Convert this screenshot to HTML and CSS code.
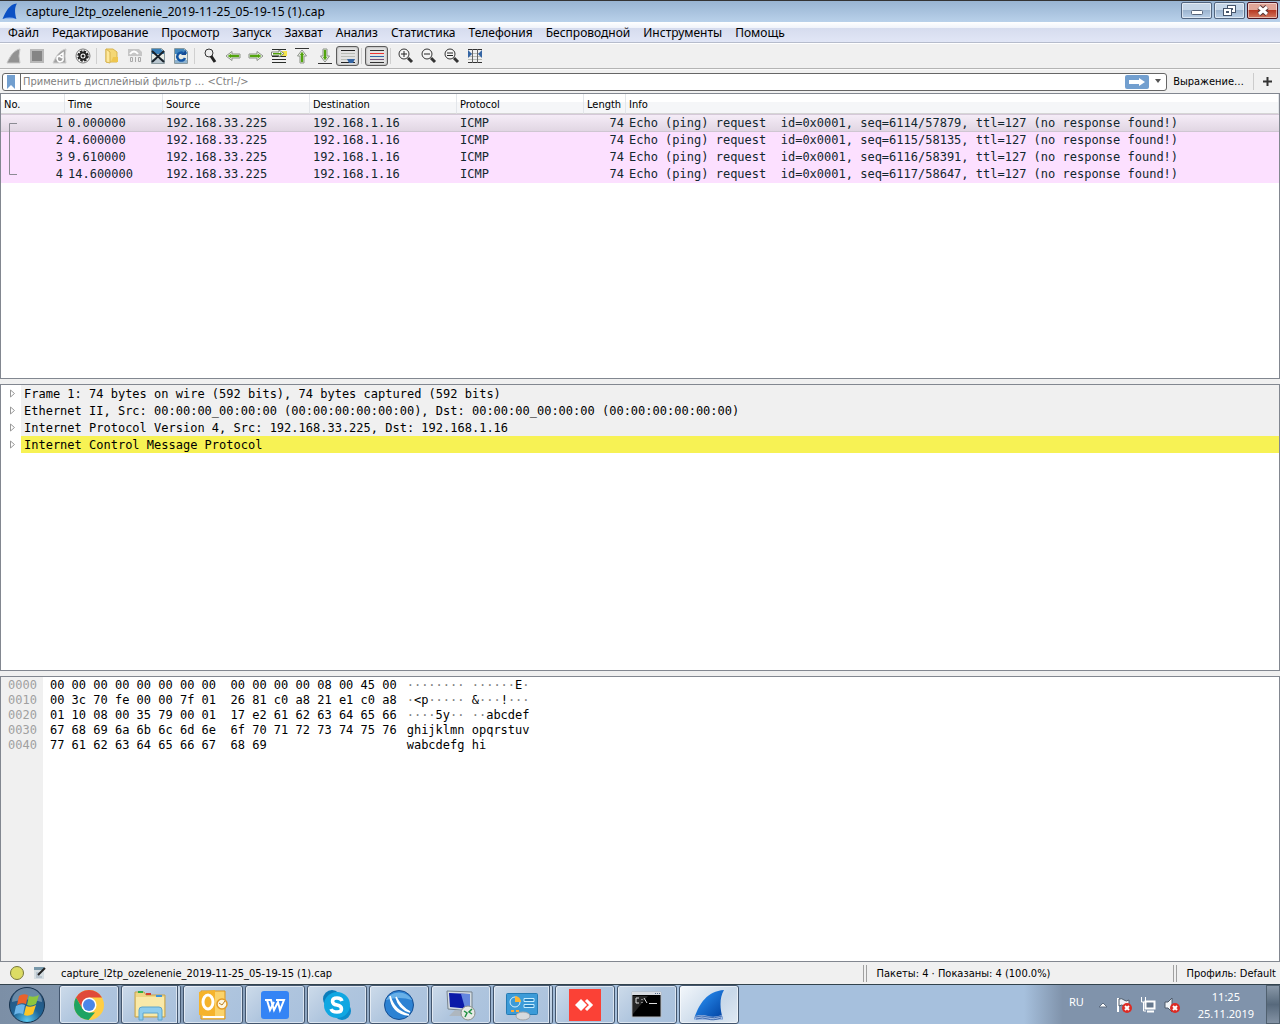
FILE: index.html
```
<!DOCTYPE html>
<html lang="ru">
<head>
	<meta charset="UTF-8">
	<title>capture_l2tp_ozelenenie_2019-11-25_05-19-15 (1).cap</title>
	<link rel="stylesheet" href="styles.css">
</head>
<body>
	<div class="titlebar">
		<svg class="fin" width="16" height="17" viewBox="0 0 30 32"><path d="M1 30C7 16 14 2 28 1C23 9 24 20 27 30Z" fill="#0b50c4"/><path d="M1 30q13-5 26 0Z" fill="#8fb4ea"/></svg>
		<h1>capture_l2tp_ozelenenie_2019-11-25_05-19-15 (1).cap</h1>
		<div class="window_buttons">
			<button type="button" aria-label="Свернуть"><svg width="30" height="15"><rect x="9.500" y="7.500" width="11" height="4" rx="1" fill="#fff" stroke="#56647a"/></svg></button>
			<button type="button" aria-label="Восстановить"><svg width="30" height="15" fill="#fff" stroke="#46556b"><rect x="12.500" y="2.500" width="8" height="7"/><rect x="15.500" y="5.500" width="2" height="1"/><rect x="8.500" y="5.500" width="8" height="7"/><rect x="11.500" y="8.500" width="2" height="1"/></svg></button>
			<button type="button" class="close" aria-label="Закрыть"><svg width="30" height="15"><path d="M11 4l8 7M19 4l-8 7" stroke="#533" stroke-width="5"/><path d="M11 4l8 7M19 4l-8 7" stroke="#fff" stroke-width="3"/></svg></button>
		</div>
	</div>
	<nav class="menu">
		<button type="button">Файл</button>
		<button type="button">Редактирование</button>
		<button type="button">Просмотр</button>
		<button type="button">Запуск</button>
		<button type="button">Захват</button>
		<button type="button">Анализ</button>
		<button type="button">Статистика</button>
		<button type="button">Телефония</button>
		<button type="button">Беспроводной</button>
		<button type="button">Инструменты</button>
		<button type="button">Помощь</button>
	</nav>
	<div class="toolbar">
		<button type="button" aria-label="Начать захват"><svg width="16" height="16"><path d="M1 15C4 8 8 2 14 1q-2 7 0 14Z" fill="#929292" stroke="#c6c6c6"/></svg></button>
		<button type="button" aria-label="Остановить"><svg width="16" height="16"><path d="M2 2h12v12H2z" fill="#858585" stroke="#b9b9b9" stroke-width="2"/></svg></button>
		<button type="button" aria-label="Перезапустить"><svg width="16" height="16"><path d="M1 15C4 8 8 2 14 1q-2 7 0 14Z" fill="#a2a2a2" stroke="#ccc"/><path d="M7 8a3 3 0 1 0 4 2M7 8l4-3v5Z" fill="none" stroke="#fff" stroke-width="1.500"/></svg></button>
		<button type="button" aria-label="Параметры захвата"><svg width="16" height="16"><circle cx="8" cy="8" r="7" fill="#fff" stroke="#777"/><circle cx="8" cy="8" r="5" fill="none" stroke="#222" stroke-width="1.500" stroke-dasharray="2.600 1.330"/><circle cx="8" cy="8" r="3.500" fill="#fff" stroke="#222" stroke-width="2"/><circle cx="8" cy="8" r="1.500" fill="#222"/></svg></button>
		<span class="sep"></span>
		<button type="button" aria-label="Открыть"><svg width="16" height="16"><path d="M2 1h7l4 3v10H2z" fill="#f4d775" stroke="#d7b450"/><path d="M2 1l4 3v11l-4-1z" fill="#ffe99c" stroke="#d7b450"/><path d="M9 9h5v5H7z" fill="#eec64f"/></svg></button>
		<button type="button" aria-label="Сохранить"><svg width="16" height="16"><path d="M1 1h11l3 3v11H1z" fill="#c6c6c6"/><path d="M3 6q4-5 8 0" fill="none" stroke="#fff" stroke-width="2"/><path d="M1 8h14v7H1z" fill="#eee"/><path d="M3.500 9.500h2v4h-2zM8.500 9v5M11.500 9.500h2v4h-2z" fill="none" stroke="#aaa"/></svg></button>
		<button type="button" aria-label="Закрыть файл"><svg width="16" height="16"><path d="M1.500.500h10l3 3v12h-13z" fill="#e8ece5" stroke="#8a9a9f"/><path d="M2 1h9l3 3v2H2z" fill="#3a80b8"/><path d="M2 11h12v4H2z" fill="#b9c6cf"/><path d="M2 3l12 11M14 3L2 14" stroke="#18212a" stroke-width="2"/></svg></button>
		<button type="button" aria-label="Обновить"><svg width="16" height="16"><path d="M1.500.500h10l3 3v12h-13z" fill="#e8ece5" stroke="#8a9a9f"/><path d="M2 1h9l3 3v2H2z" fill="#4488bd"/><path d="M2 12h12v3H2z" fill="#8eb2ce"/><path d="M10 5a4 4 0 1 0 2 5" fill="none" stroke="#1457a5" stroke-width="2.500"/><path d="M8 7h5V2z" fill="#164b94"/></svg></button>
		<span class="sep"></span>
		<button type="button" aria-label="Найти"><svg width="16" height="16"><circle cx="7" cy="5" r="4" fill="#eee" stroke="#333"/><path d="M9 8l4 6" stroke="#222" stroke-width="3"/></svg></button>
		<button type="button" aria-label="Назад"><svg width="16" height="16"><path d="M1 8l6-4.500v2.500h8v4H7v2.500Z" fill="#fff" stroke="#8b9187"/><path d="M3 8l3-2v1h8v2H6v1Z" fill="#4ea106" stroke="#64ad2b" stroke-width=".5"/></svg></button>
		<button type="button" aria-label="Вперёд"><svg width="16" height="16"><path d="M15 8L9 3.500v2.500H1v4h8v2.500Z" fill="#fff" stroke="#8b9187"/><path d="M13 8l-3-2v1H2v2h8v1Z" fill="#4ea106" stroke="#64ad2b" stroke-width=".5"/></svg></button>
		<button type="button" aria-label="К пакету"><svg width="16" height="16"><path d="M1 1.500h14M1 8.500h14M1 11.500h14M1 14.500h14" stroke="#2b2f2b"/><path d="M11 3h5v5h-5z" fill="#f2e34b"/><path d="M13 5.500L8 2v2H.500v3.500H8V9Z" fill="#fff" stroke="#7d8679"/><path d="M11 5.500L9 4v1H2v1.500h7v1Z" fill="#4ea106"/></svg></button>
		<button type="button" aria-label="К первому пакету"><svg width="16" height="16"><path d="M1 .500h14" stroke="#333"/><path d="M8 2l4.500 6h-2.500v7H6V8H3.500Z" fill="#fff" stroke="#8b9187"/><path d="M8 4l2 3H9v7H7V7H6Z" fill="#4ea106" stroke="#64ad2b" stroke-width=".5"/></svg></button>
		<button type="button" aria-label="К последнему пакету"><svg width="16" height="16"><path d="M1 15.500h14" stroke="#333"/><path d="M8 14l4.500-6h-2.500V1H6v7H3.500Z" fill="#fff" stroke="#8b9187"/><path d="M8 12l2-3H9V2H7v7H6Z" fill="#4ea106" stroke="#64ad2b" stroke-width=".5"/></svg></button>
		<button type="button" class="pressed" aria-label="Автопрокрутка" aria-pressed="true"><svg width="16" height="16"><path d="M1 2.500h14M1 14.500h14" stroke="#222"/><path d="M1 5.500h14M1 8.500h14M1 11.500h14" stroke="#b9bdb6"/><path d="M7 11h8l-2 4H9z" fill="#3465a4"/></svg></button>
		<span class="sep"></span>
		<button type="button" class="pressed" aria-label="Раскраска пакетов" aria-pressed="true"><svg width="16" height="16"><path d="M1 2.500h14M1 14.500h14" stroke="#333"/><path d="M1 5.500h14" stroke="#e33"/><path d="M1 8.500h14" stroke="#3465a4"/><path d="M1 11.500h14" stroke="#75507b"/></svg></button>
		<span class="sep"></span>
		<button type="button" aria-label="Увеличить"><svg width="16" height="16"><circle cx="6" cy="6" r="5" fill="#f5f5f5" stroke="#333"/><path d="M3 6h6M6 3v6" stroke="#222"/><path d="M10 10l4 4" stroke="#333" stroke-width="3"/></svg></button>
		<button type="button" aria-label="Уменьшить"><svg width="16" height="16"><circle cx="6" cy="6" r="5" fill="#f5f5f5" stroke="#333"/><path d="M3 6h6" stroke="#222"/><path d="M10 10l4 4" stroke="#333" stroke-width="3"/></svg></button>
		<button type="button" aria-label="Обычный размер"><svg width="16" height="16"><circle cx="6" cy="6" r="5" fill="#f5f5f5" stroke="#333"/><path d="M3 5h6M3 7.500h6" stroke="#222"/><path d="M10 10l4 4" stroke="#333" stroke-width="3"/></svg></button>
		<button type="button" aria-label="Ширина столбцов"><svg width="16" height="16"><path d="M1 1.500h14M1 14.500h14" stroke="#333"/><path d="M1 5.500h14M1 8.500h14M1 11.500h14" stroke="#b9bdb6"/><path d="M5.500 1v14M10.500 1v14" stroke="#666"/><path d="M1 2l4 4-4 4zM15 2l-4 4 4 4z" fill="#3465a4"/></svg></button>
	</div>
	<form class="filter">
		<div class="filter_box">
			<button type="button" class="bookmark" aria-label="Закладки"><svg width="10" height="14"><path d="M1 0h8v14L5 10l-4 4z" fill="#729fcf"/></svg></button>
			<input type="text" class="filter_text" aria-label="Дисплейный фильтр" placeholder="Применить дисплейный фильтр … &lt;Ctrl-/&gt;">
			<button type="button" class="apply" aria-label="Применить"><svg width="24" height="14"><path d="M4 5h10V3l6 4-6 4V9H4z" fill="#fff"/></svg></button>
			<button type="button" class="drop" aria-label="История"><svg width="8" height="5"><path d="M1 0h6L4 4z" fill="#555"/></svg></button>
		</div>
		<button type="button" class="expression">Выражение…</button>
		<button type="button" class="plus" aria-label="Добавить"><svg width="9" height="9"><path d="M4.500 0v9M0 4.500h9" stroke="#333" stroke-width="2"/></svg></button>
	</form>
	<main class="panes">
		<section class="pane packets">
			<table>
				<thead>
					<tr><th class="no">No.</th><th class="time">Time</th><th class="addr">Source</th><th class="addr">Destination</th><th class="proto">Protocol</th><th class="len">Length</th><th>Info</th></tr>
				</thead>
				<tbody>
					<tr class="selected"><td class="num">1</td><td>0.000000</td><td>192.168.33.225</td><td>192.168.1.16</td><td>ICMP</td><td class="num">74</td><td>Echo (ping) request  id=0x0001, seq=6114/57879, ttl=127 (no response found!)</td></tr>
					<tr><td class="num">2</td><td>4.600000</td><td>192.168.33.225</td><td>192.168.1.16</td><td>ICMP</td><td class="num">74</td><td>Echo (ping) request  id=0x0001, seq=6115/58135, ttl=127 (no response found!)</td></tr>
					<tr><td class="num">3</td><td>9.610000</td><td>192.168.33.225</td><td>192.168.1.16</td><td>ICMP</td><td class="num">74</td><td>Echo (ping) request  id=0x0001, seq=6116/58391, ttl=127 (no response found!)</td></tr>
					<tr><td class="num">4</td><td>14.600000</td><td>192.168.33.225</td><td>192.168.1.16</td><td>ICMP</td><td class="num">74</td><td>Echo (ping) request  id=0x0001, seq=6117/58647, ttl=127 (no response found!)</td></tr>
				</tbody>
			</table>
			<svg class="related" width="9" height="53"><path d="M8 .500H.500v51H8" fill="none" stroke="#8b8b93"/></svg>
		</section>
		<section class="pane details">
			<ul>
				<li><svg width="7" height="9"><path d="M1.500 1v7l4-3.500z" fill="#fff" stroke="#999"/></svg><span>Frame 1: 74 bytes on wire (592 bits), 74 bytes captured (592 bits)</span></li>
				<li><svg width="7" height="9"><path d="M1.500 1v7l4-3.500z" fill="#fff" stroke="#999"/></svg><span>Ethernet II, Src: 00:00:00_00:00:00 (00:00:00:00:00:00), Dst: 00:00:00_00:00:00 (00:00:00:00:00:00)</span></li>
				<li><svg width="7" height="9"><path d="M1.500 1v7l4-3.500z" fill="#fff" stroke="#999"/></svg><span>Internet Protocol Version 4, Src: 192.168.33.225, Dst: 192.168.1.16</span></li>
				<li class="marked"><svg width="7" height="9"><path d="M1.500 1v7l4-3.500z" fill="#fff" stroke="#999"/></svg><span>Internet Control Message Protocol</span></li>
			</ul>
		</section>
		<section class="pane bytes">
<pre class="offsets">0000
0010
0020
0030
0040</pre>
<pre class="hex">00 00 00 00 00 00 00 00  00 00 00 00 08 00 45 00
00 3c 70 fe 00 00 7f 01  26 81 c0 a8 21 e1 c0 a8
01 10 08 00 35 79 00 01  17 e2 61 62 63 64 65 66
67 68 69 6a 6b 6c 6d 6e  6f 70 71 72 73 74 75 76
77 61 62 63 64 65 66 67  68 69</pre>
			<div class="ascii">
				<div><i>········ ······</i>E<i>·</i></div>
				<div><i>·</i>&lt;p<i>·····</i> &amp;<i>···</i>!<i>···</i></div>
				<div><i>····</i>5y<i>·· ··</i>abcdef</div>
				<div>ghijklmn opqrstuv</div>
				<div>wabcdefg hi</div>
			</div>
		</section>
	</main>
	<footer class="status">
		<button type="button" class="expert" aria-label="Экспертная информация"></button>
		<button type="button" aria-label="Комментарий"><svg width="14" height="14"><path d="M1 1h10v12H1z" fill="#d5dde1"/><path d="M1 1h10v3H1z" fill="#7898aa"/><path d="M3 7h5M3 9h4M3 11h6" stroke="#9ab"/><path d="M5 9l7-7" stroke="#222" stroke-width="2"/></svg></button>
		<span class="file">capture_l2tp_ozelenenie_2019-11-25_05-19-15 (1).cap</span>
		<span class="count">Пакеты: 4 · Показаны: 4 (100.0%)</span>
		<span class="profile">Профиль: Default</span>
	</footer>
	<div class="taskbar">
		<button type="button" class="start" aria-label="Пуск"><svg width="38" height="38" viewBox="0 0 38 38"><defs><radialGradient id="orb" cx=".5" cy=".95" r=".9"><stop offset="0" stop-color="#5cc9f0"/><stop offset=".45" stop-color="#1e6598"/><stop offset="1" stop-color="#2c5279"/></radialGradient></defs><circle cx="19" cy="19" r="17.500" fill="url(#orb)" stroke="#17324d"/><path d="M4 16a15 14 0 0 1 30 0q-15-5-30 0" fill="#fff" opacity=".3"/><path d="M11 10q4-3 9-1l-2 9q-5-2-9 1z" fill="#e8622c"/><path d="M21 10q5 2 10-1l-3 9q-5 3-9 1z" fill="#8dc63f"/><path d="M8 20q5-3 9-1l-2 9q-5-2-9 1z" fill="#6db6ea"/><path d="M18 20q5 2 10-1l-3 9q-5 3-9 1z" fill="#fdc526"/></svg></button>
		<div class="tasks">
			<button type="button" aria-label="Chrome"><svg width="32" height="32" viewBox="0 0 32 32"><circle cx="16" cy="16" r="15" fill="#ffce44"/><path d="M3 8.500A15 15 0 0 1 29 8.500H16l-6.500 11z" fill="#e04a3a"/><path d="M3 8.500l6.500 11.300L16 23.500h6L15.500 31A15 15 0 0 1 3 8.500" fill="#1ea362"/><circle cx="16" cy="16" r="7.500" fill="#fff"/><circle cx="16" cy="16" r="6" fill="#4a86e8"/></svg></button>
			<button type="button" class="stack" aria-label="Проводник"><svg width="32" height="32" viewBox="0 0 32 32"><path d="M1 3h9l2 3h19v22H1z" fill="#efd684" stroke="#c5a24f"/><path d="M4 2h5v2H4z" fill="#2eae43"/><path d="M12 4h5v2h-5z" fill="#d64031"/><path d="M22 6h6v2h-6z" fill="#3c95dd"/><path d="M2 8h28v19H2z" fill="#f9e9a9"/><path d="M5 31V21q0-3 3-3h17q3 0 3 3v10h-4v-7H9v7z" fill="#8fcdee" stroke="#5da5cc"/></svg></button>
			<button type="button" aria-label="Outlook"><svg width="32" height="32" viewBox="0 0 32 32"><path d="M4 2h24v28H4z" fill="#fbd36b" stroke="#d9931d"/><path d="M2 3l16-2v27L2 26z" fill="#f5b32c"/><ellipse cx="11" cy="13" rx="5" ry="7" fill="none" stroke="#fff" stroke-width="3"/><circle cx="25" cy="15" r="5" fill="#fff7df" stroke="#e39a24" stroke-width="1.500"/><path d="M22 14l3 2 3-4" fill="none" stroke="#b77a20"/><path d="M6 28h21" stroke="#fff" stroke-width="2"/></svg></button>
			<button type="button" aria-label="WPS"><svg width="32" height="32" viewBox="0 0 32 32"><rect x="2" y="2" width="28" height="28" rx="3" fill="#3484f5"/><path d="M6 11h6l3 10 4-8 2 8 4-10h-8" fill="none" stroke="#fff" stroke-width="2"/><path d="M8 11l3 10 4-8" fill="none" stroke="#fff" stroke-width="2"/></svg></button>
			<button type="button" aria-label="Skype"><svg width="32" height="32" viewBox="0 0 32 32"><circle cx="11" cy="10" r="9" fill="#0c7dbb"/><circle cx="21" cy="22" r="9" fill="#0c8ccc"/><circle cx="16" cy="16" r="13" fill="#10a7e2"/><path d="M21 12q-1-3-5-3c-6 0-6 6 0 7s6 7 0 7q-5 0-6-3" fill="none" stroke="#fff" stroke-width="3.500"/></svg></button>
			<button type="button" aria-label="Удалённый клиент"><svg width="32" height="32" viewBox="0 0 32 32"><circle cx="16" cy="16" r="14.500" fill="#2d82d3" stroke="#164e92"/><path d="M3 11a15 15 0 0 1 26 0q-12-4-26 0" fill="#68b0e8"/><path d="M7 7q2 18 19 19-15-4-19-19M13 8q3 12 14 15-9-5-14-15" fill="#fff" stroke="#fff" stroke-width="1.500"/></svg></button>
			<button type="button" aria-label="Удалённый рабочий стол"><svg width="32" height="32" viewBox="0 0 32 32"><path d="M2 2l25 1v19L3 20z" fill="#d4dde4" stroke="#77838d"/><path d="M4 4l21 1v15L5 18z" fill="#0b1aa8"/><path d="M16 5l9 0v15l-5-1z" fill="#6487df"/><path d="M10 21l8 1v5H4z" fill="#aeb7bf"/><circle cx="23" cy="24" r="7" fill="#e7eae7" stroke="#8b918b"/><path d="M19 22l3 2-2 4M27 20l-3 3 3 2" fill="none" stroke="#229143" stroke-width="1.500"/></svg></button>
			<button type="button" class="stack" aria-label="Панель управления"><svg width="32" height="32" viewBox="0 0 32 32"><rect x=".5" y="4.500" width="31" height="21" rx="1" fill="#3c9bd8" stroke="#267bb3"/><circle cx="9" cy="13" r="5" fill="none" stroke="#d5f0ff"/><path d="M9 13V7a6 6 0 0 1 6 6z" fill="#fcb536"/><path d="M18 9.500h10v3H18zM18 15.500h10v3H18z" fill="#267fbd" stroke="#c5edff"/><path d="M5 22h3M10 22h3" stroke="#fa3" stroke-width="2"/><ellipse cx="17" cy="27" rx="7" ry="4" fill="#d7dadd" stroke="#a0a5aa"/></svg></button>
			<button type="button" aria-label="AnyDesk"><svg width="32" height="32" viewBox="0 0 32 32"><path d="M0 0h32v32H0z" fill="#fb4136"/><path d="M6 16l6-6 6 6-6 6z" fill="#fff"/><path d="M17 11l5 5-5 5" fill="none" stroke="#fff" stroke-width="3"/></svg></button>
			<button type="button" aria-label="Командная строка"><svg width="32" height="32" viewBox="0 0 32 32"><path d="M1 3h29v25H1z" fill="#000" stroke="#b6bac0"/><path d="M1 3h29v3H1z" fill="#d8dce2"/><path d="M24 4.500h5" stroke="#536b8b" stroke-dasharray="1 1"/><path d="M8 9H5v5h3M11 10v1M11 13v1M13 9l3 5M18 14.500h8" fill="none" stroke="#ddd"/><path d="M2 7h15L2 25z" fill="#fff" opacity=".15"/></svg></button>
			<button type="button" class="active" aria-label="Wireshark"><svg width="32" height="32" viewBox="0 0 32 32"><defs><linearGradient id="fin" x2="1" y2="1"><stop offset="0" stop-color="#2f9bff"/><stop offset="1" stop-color="#003f9e"/></linearGradient></defs><path d="M1 30C6 15 14 2 31 1C26 9 27 21 30 30Z" fill="url(#fin)"/><path d="M2 27q7-2 13 0t14-1l1 5H1z" fill="#9eb9e2"/><path d="M2 28q7-2 13 0t14-1M3 30q7-2 12 0t13-1" fill="none" stroke="#456fb3"/></svg></button>
		</div>
		<div class="tray">
			<span class="lang">RU</span>
			<svg width="10" height="8"><path d="M1 6l4-4 4 4z" fill="#fff" stroke="#5d6d81"/></svg>
			<svg width="16" height="16"><path d="M2 1v14" stroke="#fff" stroke-width="2"/><path d="M3 2q3-1 5 1t5 0v6q-3 2-5 0t-5 0z" fill="#edf1f5" stroke="#4e5b6a"/><circle cx="11" cy="11" r="5" fill="#dc2b24"/><path d="M9 9l4 4M13 9l-4 4" stroke="#fff" stroke-width="2"/></svg>
			<svg width="16" height="16"><path d="M5.500 4.500h9v7h-9z" fill="#65778d" stroke="#fff" stroke-width="2"/><path d="M7 14.500h7" stroke="#fff" stroke-width="2"/><path d="M1.500 0v5h4V0M3.500 5v9H6" fill="none" stroke="#fff"/></svg>
			<svg width="16" height="16"><path d="M1 5h3l4-4v14l-4-4H1z" fill="#eff3f7" stroke="#4e5b6a"/><circle cx="11" cy="11" r="5" fill="#dc2b24"/><path d="M9 9l4 4M13 9l-4 4" stroke="#fff" stroke-width="2"/></svg>
			<div class="clock"><span>11:25</span><span>25.11.2019</span></div>
			<button type="button" class="desktop" aria-label="Свернуть все окна"></button>
		</div>
	</div>
</body>
</html>
```
FILE: styles.css
```
*{
	box-sizing:border-box;
}
body{
	margin:0;
	height:100vh;
	display:flex;
	flex-direction:column;
	background-color:#f0f0f0;
	color:#000;
	font:11px "DejaVu Sans Condensed","Noto Sans",sans-serif;
	overflow:hidden;
}
button{
	margin:0;
	padding:0;
	border:0;
	background:none;
	color:inherit;
	font:inherit;
}
svg{
	display:block;
	flex:none;
}
.titlebar{
	display:flex;
	align-items:center;
	height:22px;
	padding:0 2px;
	border-top:1px solid #333;
	background:linear-gradient(#98b4d2,#b9d1ea);
}
.titlebar h1{
	flex:1;
	margin:0 0 0 8px;
	font-size:12px;
	font-weight:normal;
	line-height:18px;
	font-family:"Noto Sans",sans-serif;
}
.window_buttons{
	display:flex;
	gap:2px;
	align-self:flex-start;
	padding-top:1px;
}
.window_buttons button{
	width:31px;
	height:17px;
	border:1px solid #52657f;
	border-radius:2px;
	background:linear-gradient(#c5d6e8 50%,#9cb4cf 50%,#bad0e8);
	box-shadow:inset 0 0 0 1px rgba(255,255,255,.5);
}
.window_buttons .close{
	border-color:#4c1420;
	background:linear-gradient(#e0a597 50%,#b83a24 50%,#d3785f);
}
.menu{
	display:flex;
	gap:13px;
	height:21px;
	padding:0 8px;
	border-bottom:1px solid #b6bccc;
	background:linear-gradient(#fff,#f0f3fa 30%,#d6dcee 31%,#e1e6f6);
	font:12px "Noto Sans",sans-serif;
}
.toolbar{
	display:flex;
	align-items:center;
	height:26px;
	padding:0 2px;
	border-top:1px solid #fff;
	border-bottom:1px solid #b4b4b4;
}
.toolbar button{
	display:flex;
	align-items:center;
	justify-content:center;
	width:23px;
	height:20px;
}
.toolbar .pressed{
	border:1px solid #5c5c5c;
	border-radius:3px;
	background:#e2e2e2;
	box-shadow:inset 0 0 2px #888;
}
.sep{
	width:1px;
	height:16px;
	margin:0 3px 0 2px;
	background:#d0d0d0;
}
.filter{
	display:flex;
	align-items:center;
	height:24px;
	margin:0;
	padding:0 2px;
	border-top:1px solid #fafafa;
}
.filter_box{
	flex:1;
	display:flex;
	align-items:center;
	height:18px;
	border:1px solid #666;
	border-radius:3px;
	background:#fff;
}
.bookmark{
	align-self:stretch;
	width:18px;
	padding:1px 3px;
	border-right:1px solid #666;
}
.filter_text{
	flex:1;
	min-width:0;
	height:16px;
	padding:0 2px;
	border:0;
	outline:none;
	background:none;
	font:inherit;
}
.filter_text::placeholder{
	color:#808080;
	opacity:1;
}
.apply{
	width:24px;
	height:14px;
	border-radius:2px;
	background:#729fcf;
}
.drop{
	width:17px;
	padding:0 5px;
}
.expression{
	padding:0 9px 0 6px;
}
.plus{
	padding:4px 6px 4px 9px;
	border-left:1px solid #ccc;
}
.panes{
	flex:1;
	display:flex;
	flex-direction:column;
	gap:5px;
	min-height:0;
}
.pane{
	position:relative;
	flex:1;
	min-height:0;
	overflow:hidden;
	border:1px solid #828790;
	background:#fff;
	font:12px/17px "DejaVu Sans Mono",monospace;
}
.packets table{
	width:100%;
	table-layout:fixed;
	border-collapse:separate;
	border-spacing:0;
}
.packets th{
	height:20px;
	padding:2px 3px 0;
	border-right:1px solid #e3e6ea;
	border-bottom:1px solid #d5d5d5;
	background:linear-gradient(#fff 40%,#f5f6f8 41%);
	font:11px "DejaVu Sans Condensed","Noto Sans",sans-serif;
	text-align:left;
}
.packets td{
	height:17px;
	padding:0 3px;
	background:#fce0ff;
	color:#12272e;
	white-space:pre;
}
.packets .selected td{
	height:18px;
	border-top:1px solid #d5c9d8;
	border-bottom:1px solid #cfc6d2;
	background:linear-gradient(#f5ecf7,#e1d6e3);
	line-height:16px;
}
.no{
	width:64px;
}
.time{
	width:98px;
}
.addr{
	width:147px;
}
.proto{
	width:127px;
}
.len{
	width:42px;
}
.packets .num{
	padding-right:2px;
	text-align:right;
}
/* bracket joining packets of one conversation */
.related{
	position:absolute;
	top:29px;
	left:8px;
}
.details ul{
	margin:0;
	padding:0;
}
.details li{
	display:flex;
	align-items:center;
	gap:5px;
	padding-left:8px;
	list-style:none;
}
.details span{
	flex:1;
	padding:1px 0 0 3px;
	background:#f0f0f0;
	line-height:16px;
	white-space:pre;
}
.details .marked span{
	background:#f7f254;
}
.bytes{
	display:flex;
	line-height:15px;
}
.bytes pre{
	margin:0;
	padding-top:1px;
	font:inherit;
}
.bytes .offsets{
	padding:1px 6px 0 7px;
	background:#f0f0f0;
	color:#a0a0a0;
}
.bytes .hex{
	padding-left:7px;
}
.ascii{
	padding:1px 0 0 10px;
	white-space:nowrap;
}
.ascii i{
	color:#808080;
	font-style:normal;
}
.status{
	display:flex;
	align-items:center;
	height:22px;
	padding:0 4px 0 10px;
}
.expert{
	width:14px;
	height:14px;
	margin-right:9px;
	border:1px solid #77773c;
	border-radius:50%;
	background:#dcdc64;
}
.file{
	flex:1;
	margin-left:14px;
}
.count,.profile{
	padding-left:10px;
	border-left:4px double #a0a0a0;
	line-height:17px;
}
.count{
	width:310px;
}
.taskbar{
	display:flex;
	height:40px;
	border-top:1px solid #33434d;
	background:linear-gradient(90deg,#7c8fa6,#89a1bd 20%,#a6c0dd 50%,#a6c0dd 80%,#8093ab 83%);
}
.start{
	width:59px;
	padding:0 8px;
}
.tasks{
	flex:1;
	display:flex;
	gap:2px;
}
.tasks button{
	display:flex;
	justify-content:center;
	align-items:center;
	width:60px;
	border:1px solid #43566e;
	border-radius:3px;
	background:linear-gradient(135deg,#cddbea,#afc5de 50%,#a9c1dd);
	box-shadow:inset 0 0 0 1px rgba(255,255,255,.55);
}
.tasks .stack{
	border-right:4px double #43566e;
}
.tasks .active{
	background:linear-gradient(135deg,#f3f7fb,#c8d8e9 60%,#dfe9f3);
}
.tray{
	display:flex;
	align-items:center;
	gap:8px;
	color:#fff;
	font:11px/17px "Noto Sans",sans-serif;
}
.lang{
	margin-right:6px;
	padding-bottom:6px;
}
.clock{
	display:flex;
	flex-direction:column;
	align-items:center;
	margin:0 4px 0 10px;
}
.desktop{
	align-self:stretch;
	width:14px;
	border:1px solid #50606f;
	background:linear-gradient(#8998a8,#57697c 50%,#8493a5);
}
```
